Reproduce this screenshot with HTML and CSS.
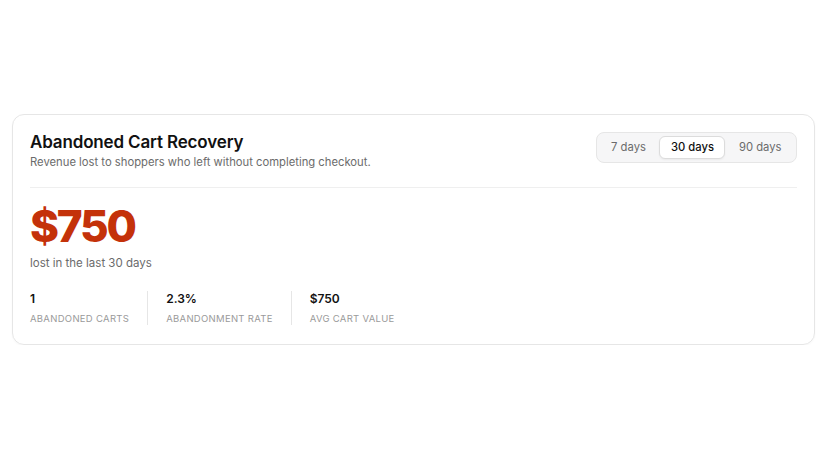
FILE: index.html
```html
<!DOCTYPE html>
<html lang="en">
<head>
    <meta charset="UTF-8">
    <meta name="viewport" content="width=device-width, initial-scale=1.0">
    <title>Abandoned Cart Recovery</title>
    <link rel="stylesheet" href="styles.css">
</head>
<body>
    <section class="card">
        <header class="card-head">
            <div>
                <h1 class="title">Abandoned Cart Recovery</h1>
                <p class="subtitle">Revenue lost to shoppers who left without completing checkout.</p>
            </div>
            <div class="range">
                <button class="range-btn">7 days</button>
                <button class="range-btn active">30 days</button>
                <button class="range-btn">90 days</button>
            </div>
        </header>

        <div class="total">$750</div>
        <p class="total-note">lost in the last 30 days</p>

        <div class="stats">
            <div class="stat">
                <div class="stat-value">1</div>
                <div class="stat-label">Abandoned carts</div>
            </div>
            <div class="stat">
                <div class="stat-value">2.3%</div>
                <div class="stat-label">Abandonment rate</div>
            </div>
            <div class="stat">
                <div class="stat-value">$750</div>
                <div class="stat-label">Avg cart value</div>
            </div>
        </div>
    </section>
</body>
</html>
```

FILE: styles.css
```css
:root {
    --text-color: #111;
    --muted-color: #6b6b6b;
    --faint-color: #9a9a9a;
    --border-color: #e6e6e6;
    --accent-color: #c4320a;
}

body {
    margin: 0;
    padding: 114px 13px 0 12px;
    font-family: Inter, 'Liberation Sans', sans-serif;
    color: var(--text-color);
    background: #fff;
}

.card {
    border: 1px solid var(--border-color);
    border-radius: 12px;
    padding: 17px 17px 19px;
    box-shadow: 0 1px 2px rgba(0,0,0,0.03);
}

.card-head {
    display: flex;
    justify-content: space-between;
    align-items: flex-start;
    padding-bottom: 17px;
    border-bottom: 1px solid #efefef;
}

.title {
    margin: 0;
    font-size: 17px;
    font-weight: 600;
    line-height: 20px;
    letter-spacing: -0.15px;
}

.subtitle {
    margin: 3px 0 0;
    font-size: 11.25px;
    line-height: 15px;
    color: var(--muted-color);
}

.range {
    display: flex;
    gap: 2px;
    padding: 3px;
    background: #f6f6f7;
    border: 1px solid var(--border-color);
    border-radius: 8px;
}

.range-btn {
    font-family: inherit;
    font-size: 11.25px;
    line-height: 15px;
    color: var(--muted-color);
    background: none;
    border: 1px solid transparent;
    border-radius: 6px;
    padding: 3px 10.5px;
    cursor: pointer;
}

.range-btn.active {
    background: #fff;
    color: var(--text-color);
    font-weight: 500;
    border-color: #dcdcdc;
    box-shadow: 0 1px 2px rgba(0,0,0,0.05);
}

.total {
    margin-top: 14px;
    font-size: 44px;
    font-weight: 800;
    line-height: 48px;
    letter-spacing: -2.2px;
    color: var(--accent-color);
}

.total-note {
    margin: 6px 0 0;
    font-size: 11.5px;
    line-height: 15px;
    color: var(--muted-color);
}

.stats {
    display: flex;
    margin-top: 20px;
}

.stat {
    padding: 0 18px;
    border-left: 1px solid var(--border-color);
}

.stat:first-child {
    padding-left: 0;
    border-left: none;
}

.stat-value {
    font-size: 12px;
    font-weight: 600;
    line-height: 15px;
}

.stat-label {
    margin-top: 6px;
    font-size: 9.5px;
    line-height: 13px;
    letter-spacing: 0.3px;
    text-transform: uppercase;
    color: var(--faint-color);
}
```
